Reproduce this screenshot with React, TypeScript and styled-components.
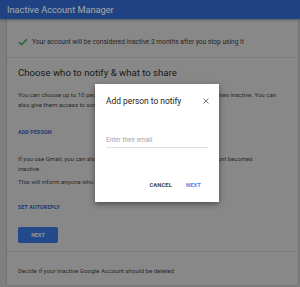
import React from 'react';
import styled, { createGlobalStyle } from 'styled-components';

const GlobalStyle = createGlobalStyle`
  html, body {
    margin: 0;
    padding: 0;
    background: #c4c4c4;
    font-family: Roboto, "Liberation Sans", Arial, sans-serif;
    overflow: hidden;
  }
`;

const Page = styled.div`
  width: 300px;
  height: 287px;
  position: relative;
  overflow: hidden;
`;

const Header = styled.header`
  height: 19px;
  background: #2f66c8;
  color: #ffffff;
  font-size: 9.2px;
  display: flex;
  align-items: center;
  padding-left: 7px;
  box-shadow: 0 1px 3px rgba(0, 0, 0, 0.35);
  position: relative;
  z-index: 1;
`;

const Card = styled.main`
  margin-left: 7px;
  width: 291px;
  height: 266px;
  background: #d2d2d2;
  box-shadow: 0 0 2px rgba(0, 0, 0, 0.3);
  display: flex;
  flex-direction: column;
`;

const Section = styled.section<{ $h: number }>`
  height: ${(p) => p.$h}px;
  flex: none;
  padding: 0 11px;
  border-bottom: 1px solid #bdbdbd;
  display: flex;
  flex-direction: column;
  box-sizing: border-box;
  &:last-child {
    border-bottom: none;
  }
`;

const StatusRow = styled.div`
  display: flex;
  align-items: center;
  gap: 4px;
  height: 8px;
  margin-top: 19px;
  font-size: 6.6px;
  color: #383838;
`;

const Title = styled.h2`
  margin: 10px 0 0;
  font-size: 9.6px;
  font-weight: 400;
  color: #2a2a2a;
  line-height: 10px;
`;

const Para = styled.p<{ $mt: number }>`
  margin: ${(p) => p.$mt}px 0 0;
  font-size: 6.1px;
  line-height: 9.5px;
  color: #3e3e3e;
  white-space: nowrap;
`;

const LinkBtn = styled.div<{ $mt: number }>`
  margin-top: ${(p) => p.$mt}px;
  font-size: 5.4px;
  font-weight: 700;
  color: #2d5cb0;
  letter-spacing: 0.1px;
  line-height: 8px;
`;

const PrimaryBtn = styled.div`
  margin-top: 16px;
  width: 40px;
  height: 16px;
  border-radius: 2px;
  background: #3470d6;
  color: #e4e4e4;
  font-size: 5.4px;
  font-weight: 700;
  display: flex;
  align-items: center;
  justify-content: center;
`;

const Footer = styled.div`
  margin-top: 15px;
  font-size: 6.2px;
  color: #3e3e3e;
  line-height: 8px;
`;

const Scrim = styled.div`
  position: absolute;
  inset: 0;
  background: rgba(0, 0, 0, 0.35);
  z-index: 2;
`;

const Dialog = styled.div`
  position: absolute;
  left: 95px;
  top: 84px;
  width: 124px;
  height: 118px;
  background: #ffffff;
  box-shadow: 0 2px 6px rgba(0, 0, 0, 0.45);
  z-index: 3;
  padding: 0 11px;
  box-sizing: border-box;
  display: flex;
  flex-direction: column;
`;

const DialogHead = styled.div`
  display: flex;
  align-items: center;
  justify-content: space-between;
  margin-top: 11px;
  height: 12px;
`;

const DialogTitle = styled.h3`
  margin: 0;
  font-size: 8.4px;
  font-weight: 400;
  color: #222;
`;

const Close = styled.svg`
  width: 8px;
  height: 8px;
  margin-right: -2px;
`;

const Input = styled.div`
  margin-top: 29px;
  padding-bottom: 3px;
  border-bottom: 1px solid #e0e0e0;
  font-size: 6.4px;
  color: #a6a6a6;
  line-height: 8px;
`;

const Actions = styled.div`
  margin-top: 34px;
  display: flex;
  justify-content: flex-end;
  gap: 14px;
  padding-right: 7px;
`;

const DialogBtn = styled.span<{ $primary?: boolean }>`
  font-size: 5.8px;
  font-weight: 700;
  color: ${(p) => (p.$primary ? '#4a86e8' : '#444')};
  letter-spacing: 0.1px;
`;

export default function App() {
  return (
    <>
      <GlobalStyle />
      <Page>
        <Header>Inactive Account Manager</Header>
        <Card>
          <Section $h={39}>
            <StatusRow>
              <svg width="10" height="8" viewBox="0 0 10 8">
                <path d="M1 4.2 L3.6 6.6 L9 1.2" fill="none" stroke="#2e9a4a" strokeWidth="1.4" />
              </svg>
              Your account will be considered inactive 3 months after you stop using it
            </StatusRow>
          </Section>
          <Section $h={194}>
            <Title>Choose who to notify &amp; what to share</Title>
            <Para $mt={12}>
              You can choose up to 10 people to notify when your Google Account becomes inactive. You can
              <br />
              also give them access to some of your data if you'd like.
            </Para>
            <LinkBtn $mt={19}>ADD PERSON</LinkBtn>
            <Para $mt={18}>
              If you use Gmail, you can also set up an automatic email reply if your account becomes
              <br />
              inactive.
            </Para>
            <Para $mt={4}>This will inform anyone who sends you email about your account.</Para>
            <LinkBtn $mt={16}>SET AUTOREPLY</LinkBtn>
            <PrimaryBtn>NEXT</PrimaryBtn>
          </Section>
          <Section $h={33}>
            <Footer>Decide if your inactive Google Account should be deleted</Footer>
          </Section>
        </Card>
        <Scrim />
        <Dialog>
          <DialogHead>
            <DialogTitle>Add person to notify</DialogTitle>
            <Close viewBox="0 0 8 8">
              <path d="M1.5 1.5 L6.5 6.5 M6.5 1.5 L1.5 6.5" stroke="#777" strokeWidth="1" />
            </Close>
          </DialogHead>
          <Input>Enter their email</Input>
          <Actions>
            <DialogBtn>CANCEL</DialogBtn>
            <DialogBtn $primary>NEXT</DialogBtn>
          </Actions>
        </Dialog>
      </Page>
    </>
  );
}
